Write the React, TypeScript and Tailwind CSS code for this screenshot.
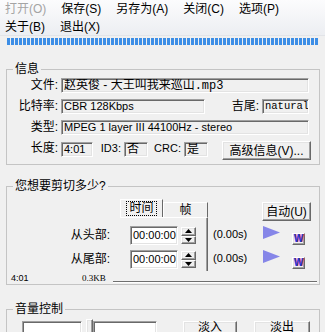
import React from 'react';

const sunken =
  'border border-t-[#a0a0a0] border-l-[#a0a0a0] border-r-white border-b-white shadow-[inset_1px_1px_0_#696969,inset_-1px_-1px_0_#e3e3e3]';
const raised =
  'border border-t-white border-l-white border-r-[#696969] border-b-[#696969] shadow-[inset_-1px_-1px_0_#a0a0a0,inset_1px_1px_0_#e3e3e3] bg-[#f0f0f0]';

function Field({ w, children, className = '' }: { w: string; children?: React.ReactNode; className?: string }) {
  return (
    <div className={`${sunken} ${w} h-[15px] pl-[2px] leading-[13px] whitespace-nowrap overflow-hidden ${className}`}>
      {children}
    </div>
  );
}

function Label({ w, children, className = '' }: { w: string; children: React.ReactNode; className?: string }) {
  return <div className={`${w} text-right pr-[3px] leading-[15px] whitespace-nowrap ${className}`}>{children}</div>;
}

function Spinner() {
  return (
    <div className="flex flex-col w-[15px] h-[17px]">
      <div className={`${raised} flex-1 flex items-center justify-center`}>
        <svg width="7" height="4" viewBox="0 0 7 4"><path d="M3.5 0L7 4H0z" fill="#000" /></svg>
      </div>
      <div className={`${raised} flex-1 flex items-center justify-center`}>
        <svg width="7" height="4" viewBox="0 0 7 4"><path d="M0 0h7L3.5 4z" fill="#000" /></svg>
      </div>
    </div>
  );
}

function PlayRow() {
  return (
    <div className="flex h-[19px] items-center">
      <svg width="17" height="13" viewBox="0 0 17 13" className="ml-[1px] mb-[4px]">
        <path d="M0 0L17 6.5L0 13z" fill="#8686e8" />
      </svg>
      <div className={`${raised} ml-[12px] mt-[8px] w-[13px] h-[12px] flex items-center justify-center text-[10px] font-bold leading-none text-[#2435e0] [text-shadow:1px_0_0_#e04040]`}>
        W
      </div>
    </div>
  );
}

export default function App() {
  return (
    <div className="w-[325px] h-[332px] overflow-hidden bg-[#f0f0f0] text-[12px] text-black font-['Liberation_Sans','Noto_Sans_CJK_SC',sans-serif]">
      {/* menu */}
      <div className="h-[36px] bg-linear-to-b from-[#fcfcfd] to-[#eceef2] border-b border-[#e2e4e8] leading-[18px]">
        <div className="flex gap-[15px] pl-[5px] h-[18px]">
          <span className="text-[#a4a4a4]">打开(O)</span>
          <span>保存(S)</span>
          <span>另存为(A)</span>
          <span>关闭(C)</span>
          <span>选项(P)</span>
        </div>
        <div className="flex gap-[15px] pl-[5px] h-[18px]">
          <span>关于(B)</span>
          <span>退出(X)</span>
        </div>
      </div>

      {/* progress */}
      <div className="mt-[2px] mx-[7px] h-[7px] bg-[repeating-linear-gradient(90deg,#3d8ee6_0px,#3d8ee6_3px,transparent_3px,transparent_4px)]" />

      {/* 信息 */}
      <fieldset className="ml-[6px] mr-[5px] mt-[17px] border border-[#c4c4c4] pt-[2px] pb-[4px]">
        <legend className="ml-[6px] px-[2px] leading-[14px]">信息</legend>
        <div className="flex h-[15px]">
          <Label w="w-[54px]">文件:</Label>
          <Field w="w-[248px]">
            赵英俊 - 大王叫我来巡山<span className="font-['Liberation_Mono',monospace]">.mp3</span>
          </Field>
        </div>
        <div className="flex h-[15px] mt-[6px]">
          <Label w="w-[54px]">比特率:</Label>
          <Field w="w-[144px]" className="text-[11px]">CBR 128Kbps</Field>
          <Label w="w-[57px]">吉尾:</Label>
          <Field w="w-[47px]" className="font-['Liberation_Mono',monospace] text-[10.5px]">natural</Field>
        </div>
        <div className="flex h-[15px] mt-[6px]">
          <Label w="w-[54px]">类型:</Label>
          <Field w="w-[248px]" className="text-[11px]">MPEG 1 layer III 44100Hz - stereo</Field>
        </div>
        <div className="flex h-[19px] mt-[6px] items-start">
          <Label w="w-[54px]">长度:</Label>
          <Field w="w-[32px]" className="mt-[1px] text-[11px]">4:01</Field>
          <Label w="w-[31px]" className="text-[11px]">ID3:</Label>
          <Field w="w-[24px]" className="mt-[1px]">否</Field>
          <Label w="w-[36px]" className="text-[11px]">CRC:</Label>
          <Field w="w-[24px]" className="mt-[1px]">是</Field>
          <div className={`${raised} ml-[14px] w-[89px] h-[19px] flex items-center justify-center leading-none`}>
            高级信息(V)...
          </div>
        </div>
      </fieldset>

      {/* 剪切 */}
      <fieldset className="ml-[6px] mr-[5px] mt-[14px] border border-[#c4c4c4] pb-[1px]">
        <legend className="ml-[6px] px-[2px] leading-[14px]">您想要剪切多少?</legend>
        <div className="flex pt-[6px]">
          <div className="w-[113px] pt-[26px] flex flex-col gap-[5px] pr-[10px]">
            <div className="h-[19px] flex items-center justify-end">从头部:</div>
            <div className="h-[19px] flex items-center justify-end">从尾部:</div>
          </div>
          <div className="w-[88px]">
            <div className="flex h-[18px] items-end">
              <div className="h-[18px] w-[43px] border border-b-0 border-t-white border-l-white border-r-[#696969] flex items-center justify-center">
                <span className="outline outline-dotted outline-1 outline-black px-[2px] leading-[13px]">时间</span>
              </div>
              <div className="h-[15px] w-[45px] border border-b-0 border-t-white border-l-white border-r-[#696969] flex items-center justify-center leading-[13px]">
                帧
              </div>
            </div>
            <div className="h-[54px] border-t border-t-white border-r border-r-[#696969] shadow-[inset_-1px_0_0_#a0a0a0] pt-[8px] pl-[10px] flex flex-col gap-[5px]">
              {[0, 1].map((i) => (
                <div key={i} className="flex items-center gap-[3px] h-[19px]">
                  <div className={`${sunken} bg-white w-[48px] h-[19px] pl-[2px] text-[11px] leading-[17px]`}>00:00:00</div>
                  <Spinner />
                </div>
              ))}
            </div>
          </div>
          <div className="w-[54px] pt-[26px] pl-[5px] flex flex-col gap-[5px] text-[11px]">
            <div className="h-[19px] flex items-center">(0.00s)</div>
            <div className="h-[19px] flex items-center">(0.00s)</div>
          </div>
          <div className="flex-1 pt-[3px]">
            <div className={`${raised} w-[49px] h-[19px] flex items-center justify-center leading-none`}>自动(U)</div>
            <div className="mt-[4px] flex flex-col gap-[5px]">
              <PlayRow />
              <PlayRow />
            </div>
          </div>
        </div>
        <div className="flex items-end h-[12px] text-[9px] leading-[10px]">
          <span className="ml-[4px] w-[71px]">4:01</span>
          <span className="w-[31px] font-['Liberation_Serif',serif]">0.3KB</span>
          <div className="flex-1 mr-[2px] h-[2px] border-t border-t-[#6f6f6f] border-b border-b-white" />
        </div>
      </fieldset>

      {/* 音量控制 */}
      <fieldset className="ml-[6px] mr-[5px] mt-[17px] border border-[#c4c4c4] pt-[5px]">
        <legend className="ml-[6px] px-[2px] leading-[14px]">音量控制</legend>
        <div className="flex items-start">
          <div className={`${sunken} bg-white ml-[15px] w-[60px] h-[20px]`} />
          <div className={`${raised} ml-[4px] -mt-[2px] w-[7px] h-[22px]`} />
          <div className={`${sunken} bg-white w-[64px] h-[20px]`} />
          <div className={`${raised} ml-[26px] w-[54px] h-[20px] flex justify-center`}>
            <span className="-mt-[2px] leading-[14px]">淡入</span>
          </div>
          <div className={`${raised} ml-[17px] w-[56px] h-[20px] flex justify-center`}>
            <span className="-mt-[2px] leading-[14px]">淡出</span>
          </div>
        </div>
      </fieldset>
    </div>
  );
}
